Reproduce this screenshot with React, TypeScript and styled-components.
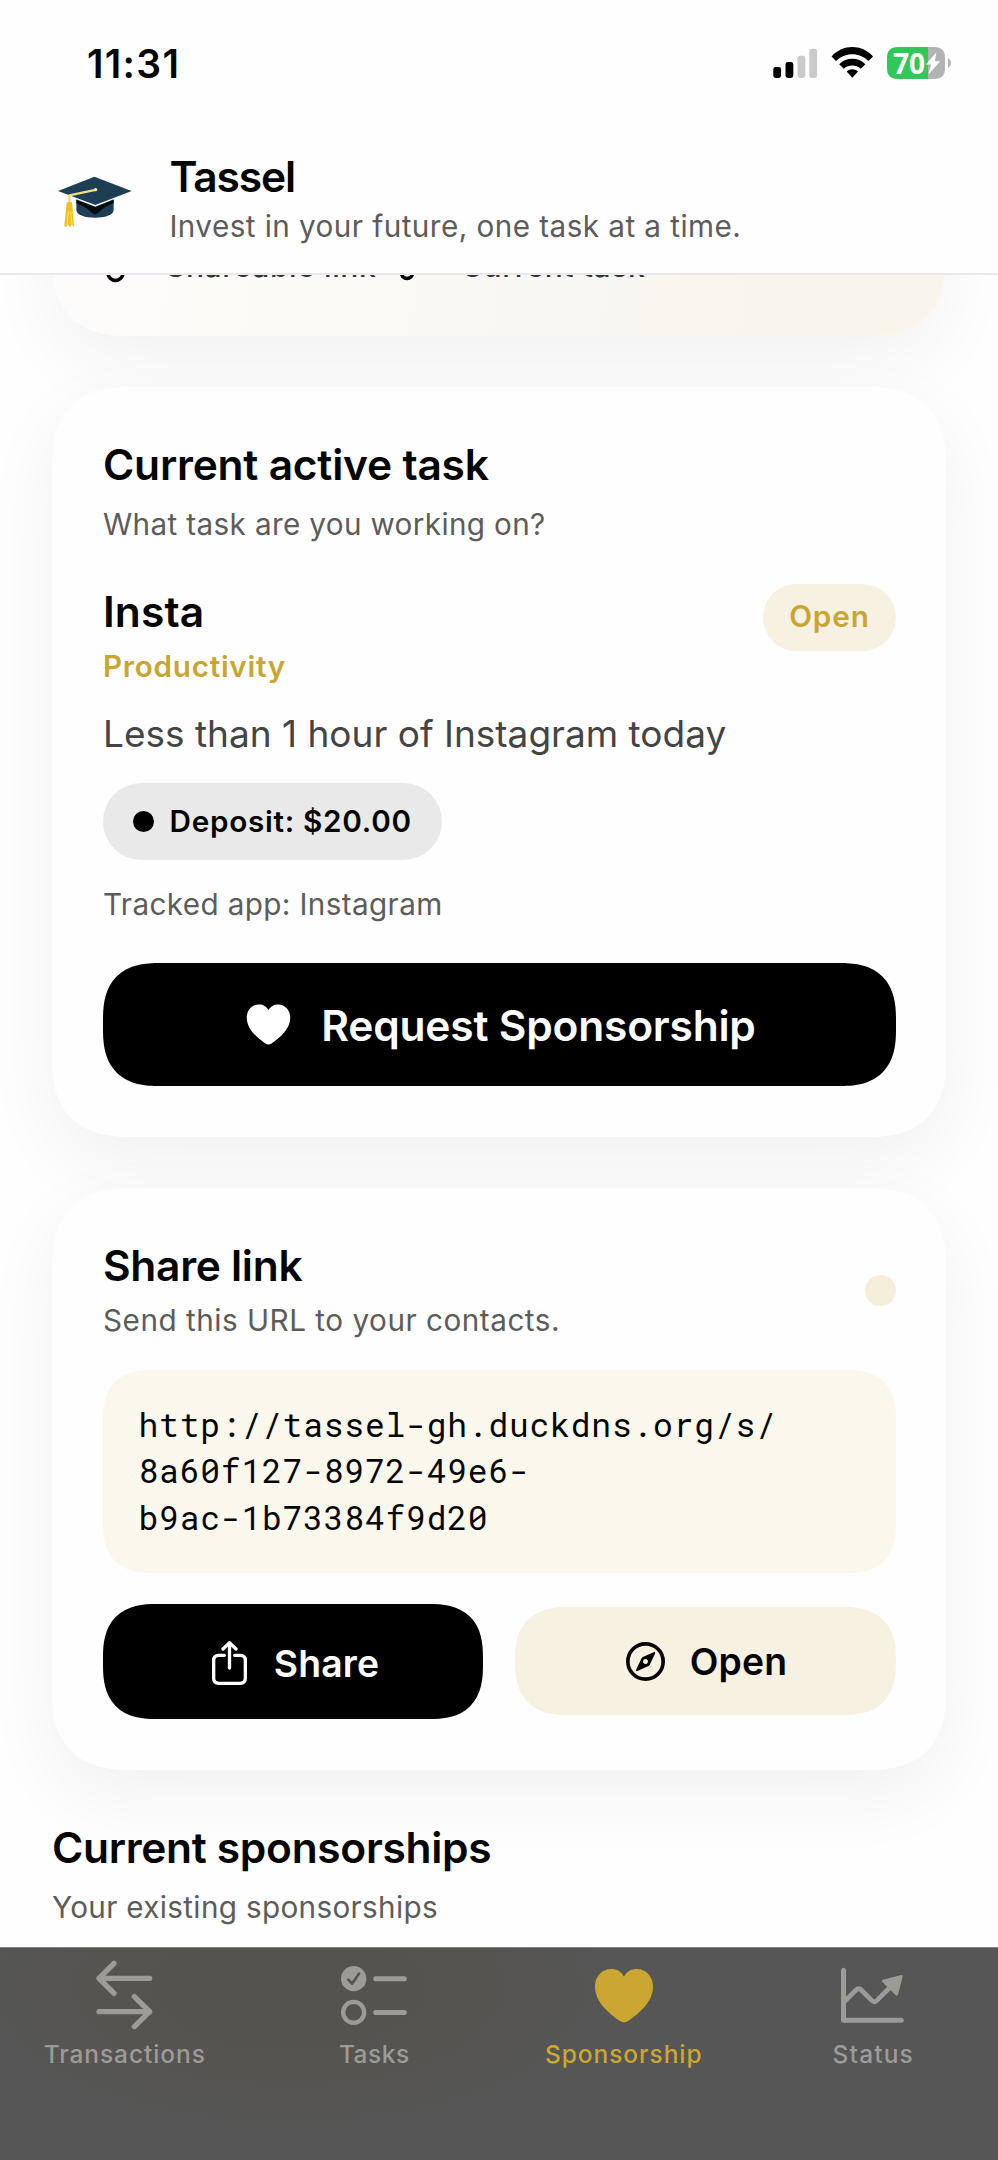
import React from "react";
import styled, { createGlobalStyle, css } from "styled-components";

const GOLD = "#c9a634";
const CREAM = "#f7f1e1";

const GlobalStyle = createGlobalStyle`
  *, *::before, *::after { box-sizing: border-box; }
  body {
    margin: 0;
    background: #fefefe;
    color: #050505;
    font-family: Inter, "Liberation Sans", sans-serif;
  }
  svg { display: block; flex: none; }
`;

/* rounded corners with the continuous curvature of the platform */
const smoothCorners = (radius: number) => css`
  border-radius: ${radius}px;
  corner-shape: superellipse(1.35);
`;

const Screen = styled.div`
  width: 998px;
  height: 2160px;
  display: flex;
  flex-direction: column;
  overflow: hidden;
  background: #fefefe;
`;

const Header = styled.header`
  height: 275px;
  flex: none;
  border-bottom: 2px solid #e9e7ea;
  background: #fefefe;
`;

const StatusBar = styled.div`
  height: 152px;
  padding: 41px 46px 0 87px;
  display: flex;
  justify-content: space-between;
  align-items: flex-start;
`;

const Clock = styled.time`
  font-size: 39px;
  font-weight: 600;
  line-height: 46px;
  letter-spacing: 1.3px;
`;

const StatusIcons = styled.svg`
  margin-top: 4px;
`;

const BatteryLevel = styled.text`
  font: 700 28px "Open Sans", sans-serif;
  fill: #fff;
`;

const Brand = styled.div`
  display: flex;
  align-items: flex-start;
  padding-left: 56.7px;
  gap: 36px;
`;

const CapLogo = styled.svg`
  margin-top: 23px;
`;

const Stack = styled.div`
  display: flex;
  flex-direction: column;
`;

const Heading = styled.h2<{ $track?: number }>`
  margin: 0;
  font-size: 42.5px;
  font-weight: 600;
  line-height: 50px;
  white-space: nowrap;
  letter-spacing: ${(p) => p.$track ?? 0}px;
`;

const Caption = styled.p<{ $top?: number; $track?: number }>`
  margin: ${(p) => p.$top ?? 0}px 0 0;
  font-size: 29.7px;
  line-height: 40px;
  color: #5c5c5c;
  white-space: nowrap;
  letter-spacing: ${(p) => p.$track ?? 0.4}px;
`;

const Content = styled.main`
  flex: 1;
  min-height: 0;
  overflow: hidden;
  padding: 0 52px;
`;

const HeroCard = styled.section`
  height: 160px;
  margin-top: -99px;
  padding: 69.5px 0 0 51px;
  display: flex;
  align-items: flex-start;
  background: linear-gradient(100deg, #fdfcfa 10%, #f8f7f2 55%, #f9f5ec 85%);
  box-shadow: 0 25px 75px rgba(0, 0, 0, 0.05);
  ${smoothCorners(80)}
`;

const Feature = styled.div<{ $width: number; $gap: number }>`
  width: ${(p) => p.$width}px;
  display: flex;
  gap: ${(p) => p.$gap}px;
  font-size: 30px;
  font-weight: 500;
  line-height: 40px;
  letter-spacing: 0.59px;
  white-space: nowrap;
  color: #333;
`;

const Card = styled.section`
  margin-top: 51px;
  padding: 53px 50px 51px 51px;
  background: #fefefe;
  box-shadow: 0 25px 75px rgba(0, 0, 0, 0.055);
  ${smoothCorners(80)}
`;

const TaskRow = styled.div`
  display: flex;
  justify-content: space-between;
  align-items: flex-start;
  margin-top: 39.5px;
`;

const TaskName = styled(Stack)`
  padding-top: 3.6px;
`;

const Category = styled.div`
  margin-top: 8.4px;
  font-size: 29.7px;
  font-weight: 600;
  line-height: 40px;
  letter-spacing: 0.72px;
  color: ${GOLD};
`;

const StatusBadge = styled.div`
  width: 133px;
  height: 67px;
  padding-bottom: 2px;
  display: flex;
  align-items: center;
  justify-content: center;
  border-radius: 34px;
  background: ${CREAM};
  color: ${GOLD};
  font-size: 29.7px;
  font-weight: 600;
  letter-spacing: 0.9px;
`;

const Description = styled.p`
  margin: 23px 0 0;
  font-size: 37px;
  line-height: 50px;
  letter-spacing: 0;
  white-space: nowrap;
  color: #444;
`;

const DepositPill = styled.div`
  width: 339px;
  height: 77px;
  margin-top: 24px;
  padding-left: 30px;
  display: flex;
  align-items: center;
  gap: 15.5px;
  border-radius: 39px;
  background: #e9e9e9;
  font-size: 29.7px;
  font-weight: 600;
  letter-spacing: 0.72px;
`;

const Dot = styled.span<{ $size: number; $color: string }>`
  flex: none;
  width: ${(p) => p.$size}px;
  height: ${(p) => p.$size}px;
  border-radius: 50%;
  background: ${(p) => p.$color};
`;

const ButtonBase = styled.button`
  border: 0;
  padding: 0;
  display: flex;
  align-items: center;
  justify-content: center;
  font-family: inherit;
  font-weight: 600;
`;

const SponsorButton = styled(ButtonBase)`
  width: 100%;
  height: 123px;
  margin-top: 39px;
  padding: 2px 0 0 3px;
  gap: 30px;
  background: #000;
  color: #fff;
  font-size: 42.5px;
  letter-spacing: -0.2px;
  ${smoothCorners(57)}
`;

const LinkHeader = styled.div`
  display: flex;
  align-items: center;
  justify-content: space-between;
`;

const UrlBox = styled.div`
  height: 203px;
  margin-top: 30px;
  padding: 31px 35.5px;
  background: #faf7ed;
  font-family: "Roboto Mono", "DejaVu Sans Mono", monospace;
  font-size: 33px;
  line-height: 46.4px;
  letter-spacing: 0.78px;
  white-space: pre;
  ${smoothCorners(50)}
`;

const ButtonRow = styled.div`
  display: grid;
  grid-template-columns: 380px 381px;
  column-gap: 32px;
  align-items: center;
  margin-top: 31px;
`;

const LinkButton = styled(ButtonBase)<{ $primary?: boolean }>`
  height: ${(p) => (p.$primary ? 115 : 108)}px;
  background: ${(p) => (p.$primary ? "#000" : CREAM)};
  color: ${(p) => (p.$primary ? "#fff" : "#050505")};
  gap: ${(p) => (p.$primary ? 27 : 25)}px;
  padding: ${(p) => (p.$primary ? "4px 0 0 5px" : "0 0 0 2px")};
  font-size: 37.3px;
  letter-spacing: 0.2px;
  ${smoothCorners(54)}
`;

const ListIntro = styled(Stack)`
  margin-top: 53px;
`;

const TabBar = styled.nav`
  flex: none;
  height: 213px;
  padding-top: 7px;
  border-top: 1px solid #858285;
  display: grid;
  grid-template-columns: repeat(4, 1fr);
  align-items: start;
  background:
    radial-gradient(ellipse 330px 150px at 290px 40px, #55534e 30%, rgba(85, 83, 78, 0) 100%),
    #565656;
`;

const Tab = styled.div<{ $active?: boolean; $track: number }>`
  display: flex;
  flex-direction: column;
  align-items: center;
  gap: 2px;
  color: ${(p) => (p.$active ? "#cba632" : "#9c9b98")};
  font-size: 24.5px;
  font-weight: 500;
  line-height: 30px;
  letter-spacing: ${(p) => p.$track}px;
`;

const HEART =
  "M377 140 C369 124 355 117 339 117 C311 117 290 139 290 170 C290 213 328 248 365 273 Q377 281 389 273 C426 248 464 213 464 170 C464 139 443 117 415 117 C399 117 385 124 377 140 Z";

const stroke = {
  fill: "none",
  stroke: "currentColor",
  strokeLinecap: "round" as const,
  strokeLinejoin: "round" as const,
};

function DeviceStatus() {
  return (
    <StatusIcons width="180" height="34" viewBox="772 45 180 34">
      <rect x="773.3" y="67" width="7.8" height="11" rx="2.4" />
      <rect x="785.5" y="62" width="7.8" height="16" rx="2.4" />
      <rect x="797.5" y="55.7" width="7.8" height="22.3" rx="2.4" fill="#cacaca" />
      <rect x="809.3" y="48.8" width="7.8" height="29.2" rx="2.4" fill="#cacaca" />
      <path d="M831.6 56.4 C843 44 861.5 44 873 56.4 L868.5 61 C859.5 52 845 52 836 61 Z" />
      <path d="M839.2 64.2 C846.5 57 858 57 865.4 64.2 L860.8 68.8 C856 64.4 848.5 64.4 843.8 68.8 Z" />
      <path d="M846.7 71.6 C850 68.5 854.5 68.5 858 71.6 L852.3 77.7 Z" />
      <path d="M898 47 H928 V79 H898 C890.5 79 887 75.5 887 68 V58 C887 50.5 890.5 47 898 47 Z" fill="#33c759" />
      <path d="M928 47 H934 C941.5 47 945 50.5 945 58 V68 C945 75.5 941.5 79 934 79 H928 Z" fill="#b3b3b3" />
      <path d="M948 58 C952 60.5 952 65.5 948 68 Z" fill="#b3b3b3" />
      <BatteryLevel x="893" y="73.5">70</BatteryLevel>
      <path d="M936.3 52.5 L925.8 64.6 H931.2 L928.3 74.5 L940.3 61.2 H934.8 Z" fill="#fff" />
    </StatusIcons>
  );
}

function GraduationCap() {
  return (
    <CapLogo width="76.7" height="53.3" viewBox="80 105 230 160">
      <path d="M138 178 L195 200 L250 178 V210 C250 226 222 233 194 233 C166 233 138 226 138 210 Z" fill="#1c3f56" />
      <path d="M138 180 L194 201 L250 180 V189 C236 196 218 203 207 216 Q194 229 182 216 C170 203 152 196 138 190 Z" fill="#050a10" />
      <path d="M83 153 L192 110 L304 153 L195 195 Z" fill="#1c3f56" />
      <path d="M199 149 L117 166 V190" fill="none" stroke="#f3dc7c" strokeWidth="7" strokeLinejoin="round" />
      <circle cx="196" cy="149" r="5" fill="#f3e7a8" />
      <path d="M109 187 H125 L131 260 L124 254 L119 261 L113 254 L107 261 L102 257 Z" fill="#f7bd1b" />
      <path d="M114 215 L110 256 M121 215 L125 256" stroke="#fbe9b0" strokeWidth="2.5" />
    </CapLogo>
  );
}

export default function App() {
  return (
    <>
      <GlobalStyle />
      <Screen>
        <Header>
          <StatusBar>
            <Clock>11:31</Clock>
            <DeviceStatus />
          </StatusBar>
          <Brand>
            <GraduationCap />
            <Stack>
              <Heading as="h1" $track={-1.1}>Tassel</Heading>
              <Caption $top={4} $track={0.44}>Invest in your future, one task at a time.</Caption>
            </Stack>
          </Brand>
        </Header>

        <Content>
          <HeroCard>
            <Feature $width={289} $gap={39}>
              <svg width="24" height="40" viewBox="0 0 24 40">
                <circle cx="12.5" cy="27" r="7.5" fill="none" stroke="#050505" strokeWidth="3.5" />
              </svg>
              Shareable link
            </Feature>
            <Feature $width={300} $gap={45}>
              <svg width="24" height="40" viewBox="0 0 24 40">
                <circle cx="15" cy="27" r="5.5" fill="none" stroke="#050505" strokeWidth="3.5" />
              </svg>
              Current task
            </Feature>
          </HeroCard>

          <Card>
            <Heading $track={-0.22}>Current active task</Heading>
            <Caption $top={14.3} $track={0.35}>What task are you working on?</Caption>
            <TaskRow>
              <TaskName>
                <Heading as="h3" $track={0.1}>Insta</Heading>
                <Category>Productivity</Category>
              </TaskName>
              <StatusBadge>Open</StatusBadge>
            </TaskRow>
            <Description>Less than 1 hour of Instagram today</Description>
            <DepositPill>
              <Dot $size={21} $color="#000" />
              Deposit: $20.00
            </DepositPill>
            <Caption $top={24} $track={0.37}>Tracked app: Instagram</Caption>
            <SponsorButton>
              <svg width="45" height="42" viewBox="287 115 180 168">
                <path d={HEART} fill="currentColor" />
              </svg>
              Request Sponsorship
            </SponsorButton>
          </Card>

          <Card>
            <LinkHeader>
              <Stack>
                <Heading $track={-0.3}>Share link</Heading>
                <Caption $top={9} $track={0.51}>Send this URL to your contacts.</Caption>
              </Stack>
              <Dot $size={31} $color="#f5eedb" />
            </LinkHeader>
            <UrlBox>{"http://tassel-gh.duckdns.org/s/\n8a60f127-8972-49e6-\nb9ac-1b73384f9d20"}</UrlBox>
            <ButtonRow>
              <LinkButton $primary>
                <svg width="35" height="44" viewBox="36 141 105 132">
                  <g {...stroke} strokeWidth="10">
                    <path d="M73 184 H56 Q41 184 41 199 V253 Q41 268 56 268 H121 Q136 268 136 253 V199 Q136 184 121 184 H104" />
                    <path d="M88.5 222 V147 M69 165 L88.5 146 L108 165" />
                  </g>
                </svg>
                Share
              </LinkButton>
              <LinkButton>
                <svg width="39" height="39" viewBox="1278 144 117 117">
                  <circle cx="1336.5" cy="202.5" r="53" fill="none" stroke="currentColor" strokeWidth="11" />
                  <path
                    fillRule="evenodd"
                    fill="currentColor"
                    d="M1361 175 Q1368 172 1365 179 L1349 213 Q1347 216 1344 217 L1312 231 Q1306 233 1309 226 L1325 192 Q1327 189 1330 188 Z M1336.5 195 A7.5 7.5 0 1 0 1336.6 195 Z"
                  />
                </svg>
                Open
              </LinkButton>
            </ButtonRow>
          </Card>

          <ListIntro>
            <Heading $track={-0.32}>Current sponsorships</Heading>
            <Caption $top={14.2} $track={0.32}>Your existing sponsorships</Caption>
          </ListIntro>
        </Content>

        <TabBar>
          <Tab $track={0.92}>
            <svg width="90" height="82" viewBox="239 75 270 246">
              <path {...stroke} strokeWidth="16" d="M448 145 H296 M341 100 L296 145 L341 190 M296 245 H448 M402 200 L448 245 L402 290" />
            </svg>
            Transactions
          </Tab>
          <Tab $track={0.5}>
            <svg width="90" height="82" viewBox="987 75 270 246">
              <circle cx="1061" cy="146" r="38" fill="currentColor" />
              <path fill="none" stroke="#56544e" strokeWidth="8" strokeLinecap="round" strokeLinejoin="round" d="M1045 149 L1056 161 L1077 131" />
              <circle cx="1061" cy="247" r="31.5" fill="none" stroke="currentColor" strokeWidth="13" />
              <path {...stroke} strokeWidth="15" d="M1127 146.5 H1213 M1127 247.5 H1213" />
            </svg>
            Tasks
          </Tab>
          <Tab $active $track={0.95}>
            <svg width="90" height="82" viewBox="242 75 270 246">
              <path d={HEART} fill="currentColor" />
            </svg>
            Sponsorship
          </Tab>
          <Tab $track={1.15}>
            <svg width="90" height="82" viewBox="990 75 270 246">
              <g {...stroke}>
                <path strokeWidth="15" d="M1036.5 121 V270.5 H1210" />
                <path strokeWidth="14" d="M1040 214 L1074 180 Q1082 172 1090 180 L1121 211 Q1129 219 1137 211 L1180 168" />
                <path strokeWidth="8" fill="currentColor" d="M1156 153 L1210 139 L1196 193 Z" />
              </g>
            </svg>
            Status
          </Tab>
        </TabBar>
      </Screen>
    </>
  );
}
